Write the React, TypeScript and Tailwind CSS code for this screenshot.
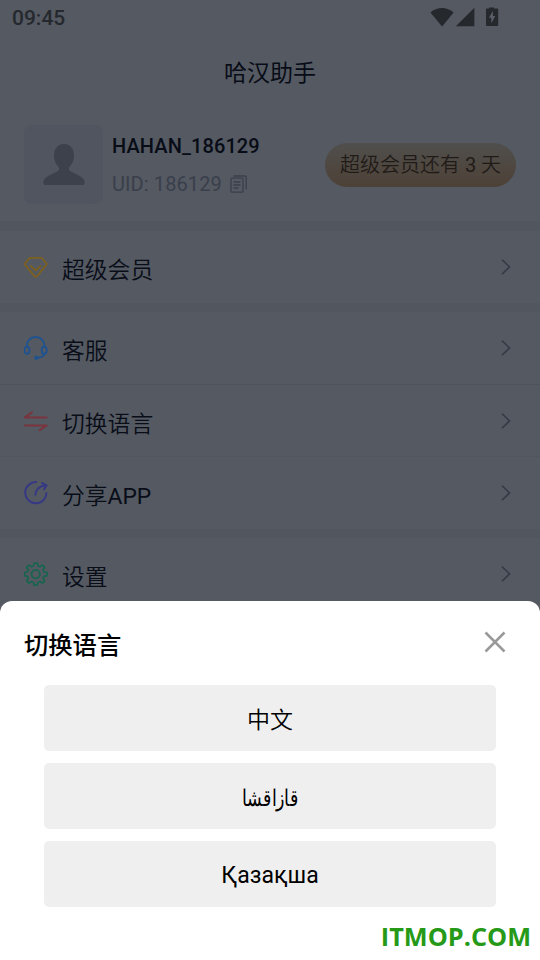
import type { ReactNode } from "react";

const iconProps = {
  viewBox: "0 0 24 24",
  fill: "none",
  strokeWidth: 1.8,
  strokeLinecap: "round" as const,
  strokeLinejoin: "round" as const,
  className: "h-6 w-6 shrink-0",
};

function DiamondIcon() {
  return (
    <svg {...iconProps} stroke="#7d6020">
      <path d="M6.4 2.8h10.4q.9 0 1.500.7l3.900 4.600q.8 1 0 2L13.200 20.800q-1.500 1.800-3 0L1.300 10.100q-.8-1 0-2L5 3.500q.5-.7 1.400-.7z" />
      <path d="m6.800 10.800 4.900 4.800 4.900-4.800" />
    </svg>
  );
}

function HeadsetIcon() {
  return (
    <svg {...iconProps} stroke="#1d5390">
      <path d="M2.6 10.5C2.6 5 6.6 1 11.6 1s9 4 9 9.5" />
      <ellipse cx="3" cy="14.2" rx="2.5" ry="3.6" />
      <ellipse cx="20.2" cy="14.2" rx="2.5" ry="3.6" />
      <path d="M20.6 17.8c-.8 2.5-3.6 3.8-7.6 4" />
      <circle cx="12.4" cy="21.8" r="1.2" fill="#1d5390" />
    </svg>
  );
}

function SwitchIcon() {
  return (
    <svg {...iconProps} stroke="#7a343e" strokeWidth={2}>
      <path d="M22.6 8.4H1L8 3.4" />
      <path d="M1 16.4h21.600l-7 4.900" />
    </svg>
  );
}

function ShareIcon() {
  return (
    <svg {...iconProps} stroke="#373984" strokeWidth={2}>
      <path d="M12.200 1.1A10.600 10.600 0 1 0 22.400 12" />
      <path d="M11.400 13.700c0-4.700 3.500-8.900 10.400-9.200" />
      <path d="m18 2 4.600 2.300-2.500 4" />
    </svg>
  );
}

function GearIcon() {
  return (
    <svg {...iconProps} stroke="#17654f" strokeWidth={1.7}>
      <path d="M10.200 1h3l.8 3 1.800.8 2.800-1.700 2.100 2.200-1.600 2.700.8 1.800 3.100.8v3l-3.100.8-.8 1.800 1.600 2.800-2.100 2.100-2.800-1.600-1.800.8-.8 2.900h-3l-.8-2.900-1.800-.8-2.700 1.600-2.200-2.100 1.600-2.800-.8-1.800-2.900-.8v-3l2.900-.8.8-1.800-1.600-2.700 2.200-2.200 2.700 1.700 1.800-.8z" />
      <circle cx="11.7" cy="12.1" r="4.2" />
    </svg>
  );
}

function Chevron() {
  return (
    <svg viewBox="0 0 10 18" fill="none" stroke="#363b46" strokeWidth="1.6" className="h-[18px] w-[10px]">
      <path d="m1 1.7 7.6 7.2L1 16.2" />
    </svg>
  );
}

function Row({ icon, children }: { icon: ReactNode; children: ReactNode }) {
  return (
    <div className="flex h-[72px] shrink-0 items-center pr-[29px] pl-6">
      {icon}
      <span className="mt-[7px] ml-3.5 flex-1 text-[22.800px] leading-8 font-[350] text-[#090d18]">{children}</span>
      <Chevron />
    </div>
  );
}

function StatusBar() {
  return (
    <div className="flex h-9 items-center justify-between pr-[41px] pl-3 text-[#25282d]">
      <span className="text-[21px] leading-9 font-medium">09:45</span>
      <div className="flex items-center">
        <svg viewBox="0 0 24 20" fill="currentColor" className="mr-[1px] mb-0.5 h-5 w-6">
          <path d="M.4 5.600C7-.6 17-.6 23.600 5.600L12.100 19.400z" />
        </svg>
        <svg viewBox="0 0 20 20" fill="currentColor" className="mr-[10px] mb-0.5 h-5 w-5">
          <path d="M19.400.8v18.500H.8z" />
        </svg>
        <svg viewBox="0 0 14 20" className="mb-[3px] h-5 w-3.5">
          <path d="M4 .5h5v1h3.200a1 1 0 0 1 1 1V18a1 1 0 0 1-1 1H2a1 1 0 0 1-1-1V2.500a1 1 0 0 1 1-1h2z" fill="currentColor" />
          <path d="m7.900 4-4 6.700h2.400v5.500l4-7.200H7.900z" fill="#5a5e66" />
        </svg>
      </div>
    </div>
  );
}

function Profile() {
  return (
    <div className="flex h-[113px] items-start pt-[17px] pr-6 pl-6">
      <div className="flex h-[79px] w-[79px] shrink-0 justify-center rounded-lg bg-[#505560] pt-[19px]">
        <svg viewBox="0 0 42 42" fill="#3c414b" className="h-[42px] w-[42px]">
          <path d="M21 0c6 0 10 4.500 10 11.500 0 5-2 9-4.500 11.500-1.500 2 0 4 2 5 4 1.800 8 3.500 11 6 2 1.800 2.500 3.500 2 5.500-.3 1-1 1.500-2 1.500h-37c-1 0-1.700-.5-2-1.500-.5-2 0-3.700 2-5.500 3-2.500 7-4.200 11-6 2-1 3.500-3 2-5C13 20.500 11 16.500 11 11.500 11 4.500 15 0 21 0z" />
        </svg>
      </div>
      <div className="ml-[9px] flex flex-1 flex-col pt-1.5">
        <span className="text-[20px] leading-[30px] font-medium tracking-[0.1px] text-[#080c16]">HAHAN_186129</span>
        <div className="mt-2 flex items-center text-[#3a3f4b]">
          <span className="text-[20px] leading-[30px] tracking-[0.1px]">UID: 186129</span>
          <svg viewBox="0 0 18 18" fill="none" stroke="currentColor" strokeWidth="1.3" className="mb-px ml-2 h-[18px] w-[18px]">
            <rect x="1" y="3.200" width="12" height="14" rx="1" />
            <path d="M3.500 1h11.700a1 1 0 0 1 1 1v12.500M3.500 7h7M3.500 10h7M3.500 13h5" />
          </svg>
        </div>
      </div>
      <div className="mt-[18px] h-[44px] w-[191px] rounded-full bg-linear-to-b from-[#504f4d] to-[#4d4136] text-center text-[20px] leading-[44px] font-[350] text-[#211b18]">
        超级会员还有 <span className="font-normal">3</span> 天
      </div>
    </div>
  );
}

const languages: { name: string; className?: string }[] = [
  { name: "中文", className: "font-[350] pt-0.5" },
  { name: "قازاقشا", className: "scale-x-[0.76] pt-px" },
  { name: "Қазақша" },
];

function LanguageSheet() {
  return (
    <div className="absolute inset-x-0 bottom-0 h-[359px] rounded-t-[12px] bg-white px-6 text-black">
      <div className="flex h-[84px] items-center justify-between pr-[10px]">
        <h2 className="mt-[5px] text-[24.300px] leading-9 font-medium">切换语言</h2>
        <svg viewBox="0 0 22 22" stroke="#999" strokeWidth="2.500" className="mb-0.5 h-[22px] w-[22px]">
          <path d="m1.500 1.500 19 19M20.500 1.500l-19 19" />
        </svg>
      </div>
      <div className="flex flex-col gap-3 px-5">
        {languages.map(({ name, className }) => (
          <button key={name} className="h-[66px] rounded-[5px] bg-[#efefef] pt-1 text-[23px] leading-8">
            <span className={`inline-block ${className ?? ""}`}>{name}</span>
          </button>
        ))}
      </div>
      <span className="absolute right-[9px] bottom-[6px] font-['Open_Sans'] text-[25.300px] leading-9 font-bold text-[#269a18]">
        ITMOP.COM
      </span>
    </div>
  );
}

export default function App() {
  return (
    <div className="relative flex h-[960px] w-[540px] flex-col overflow-hidden bg-[#545962] font-[Roboto,'Noto_Sans_CJK_SC',sans-serif]">
      <StatusBar />
      <h1 className="h-[72px] pt-0.5 text-center text-[23px] leading-[72px] text-[#080c16]">哈汉助手</h1>
      <Profile />
      <div className="h-[10px] bg-[#52565f]" />
      <Row icon={<DiamondIcon />}>超级会员</Row>
      <div className="h-[9px] bg-[#52565f]" />
      <Row icon={<HeadsetIcon />}>客服</Row>
      <div className="h-px bg-[#4e535b]" />
      <Row icon={<SwitchIcon />}>切换语言</Row>
      <div className="-mt-px h-px bg-[#50555e]" />
      <Row icon={<ShareIcon />}>
        分享<span className="font-normal">APP</span>
      </Row>
      <div className="h-[9px] bg-[#52565f]" />
      <Row icon={<GearIcon />}>设置</Row>
      <LanguageSheet />
    </div>
  );
}
